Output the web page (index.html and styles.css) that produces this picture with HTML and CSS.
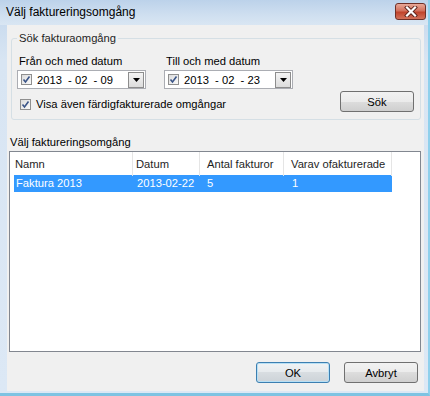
FILE: index.html
```html
<!DOCTYPE html>
<html lang="sv">
<head>
    <meta charset="UTF-8">
    <title>Välj faktureringsomgång</title>
    <link rel="stylesheet" href="styles.css">
</head>
<body>
    <div class="window">
        <div class="titlebar">
            <span class="title">Välj faktureringsomgång</span>
            <button class="close">
                <svg width="14" height="11" viewBox="0 0 14 11">
                    <path d="M3 1.5 L11 9.5 M11 1.5 L3 9.5" stroke="#5b231c" stroke-width="4" stroke-linecap="square"/>
                    <path d="M3 1.5 L11 9.5 M11 1.5 L3 9.5" stroke="#ffffff" stroke-width="2.2" stroke-linecap="square"/>
                </svg>
            </button>
        </div>

        <div class="client">
            <!-- Search group -->
            <fieldset class="group">
                <legend>Sök fakturaomgång</legend>
                <div class="date-row">
                    <div class="field">
                        <div class="field-label">Från och med datum</div>
                        <div class="datepicker">
                            <span class="check"><svg width="11" height="11" viewBox="0 0 11 11"><path d="M2.5 5.5 L4.5 8 L8.5 2.5" fill="none" stroke="#3b5588" stroke-width="1.6"/></svg></span>
                            <span class="date-text">2013 &nbsp;- 02 &nbsp;- 09</span>
                            <span class="drop"><svg width="7" height="4" viewBox="0 0 7 4"><path d="M0 0 H7 L3.5 4 Z" fill="#000"/></svg></span>
                        </div>
                    </div>
                    <div class="field">
                        <div class="field-label">Till och med datum</div>
                        <div class="datepicker">
                            <span class="check"><svg width="11" height="11" viewBox="0 0 11 11"><path d="M2.5 5.5 L4.5 8 L8.5 2.5" fill="none" stroke="#3b5588" stroke-width="1.6"/></svg></span>
                            <span class="date-text">2013 &nbsp;- 02 &nbsp;- 23</span>
                            <span class="drop"><svg width="7" height="4" viewBox="0 0 7 4"><path d="M0 0 H7 L3.5 4 Z" fill="#000"/></svg></span>
                        </div>
                    </div>
                </div>
                <div class="option-row">
                    <label class="checkbox">
                        <span class="check"><svg width="11" height="11" viewBox="0 0 11 11"><path d="M2.5 5.5 L4.5 8 L8.5 2.5" fill="none" stroke="#3b5588" stroke-width="1.6"/></svg></span>
                        Visa även färdigfakturerade omgångar
                    </label>
                    <button class="btn">Sök</button>
                </div>
            </fieldset>

            <!-- Result list -->
            <div class="list-label">Välj faktureringsomgång</div>
            <div class="listview">
                <div class="list-header">
                    <div class="col">Namn</div>
                    <div class="col">Datum</div>
                    <div class="col">Antal fakturor</div>
                    <div class="col">Varav ofakturerade</div>
                </div>
                <div class="list-row selected">
                    <div class="cell">Faktura 2013</div>
                    <div class="cell">2013-02-22</div>
                    <div class="cell">5</div>
                    <div class="cell">1</div>
                </div>
            </div>

            <div class="buttons">
                <button class="btn default">OK</button>
                <button class="btn">Avbryt</button>
            </div>
        </div>
    </div>
</body>
</html>
```

FILE: styles.css
```css
body {
    margin: 0;
    padding: 0;
    font-family: "Liberation Sans", Arial, sans-serif;
    font-size: 11.2px;
    color: #000;
    background-color: #ffffff;
}

.window {
    width: 430px;
    height: 396px;
    box-sizing: border-box;
    display: flex;
    flex-direction: column;
    background: linear-gradient(#c2d6ec, #d8e5f3 60px, #dce8f5);
    border-right: 2px solid #8fd0ec;
    border-bottom: 3px solid #7ec3e2;
}

.titlebar {
    height: 25px;
    display: flex;
    align-items: center;
    justify-content: space-between;
    padding-left: 6px;
    font-size: 12px;
    background: linear-gradient(#bcd2ea, #cfdff0 60%, #d9e6f3);
}

.title {
    margin-top: -2px;
}

.close {
    width: 31px;
    height: 17px;
    margin-right: 2px;
    margin-top: -3px;
    padding: 0;
    border: 1px solid #6f3027;
    border-radius: 3px;
    background: linear-gradient(#e8a898, #d2705c 45%, #c0442c 55%, #d2715a);
    display: flex;
    align-items: center;
    justify-content: center;
}

.client {
    flex: 1;
    margin: 0 4px 2px 7px;
    padding: 0 0 8px 0;
    background-color: #f0f0f0;
    display: flex;
    flex-direction: column;
}

/* Search group */
.group {
    margin: 7px 3px 0 4px;
    padding: 10px 5px 7px 5px;
    border: 1px solid #d5dfe5;
    border-radius: 3px;
}

.group legend {
    padding: 0 2px;
    color: #1e1e1e;
}

.date-row {
    display: flex;
    gap: 18px;
}

.field-label {
    height: 14px;
    line-height: 14px;
    padding-left: 2px;
    white-space: nowrap;
}

.datepicker {
    width: 124px;
    height: 17px;
    margin-top: 2px;
    border: 1px solid #abadb3;
    background-color: #fff;
    display: flex;
    align-items: center;
    padding-left: 3px;
}

.date-text {
    flex: 1;
    margin-left: 5px;
    white-space: nowrap;
}

.drop {
    width: 14px;
    height: 14px;
    margin-right: 1px;
    border: 1px solid #8d8d8d;
    background: linear-gradient(#f4f4f4, #dcdcdc);
    display: flex;
    align-items: center;
    justify-content: center;
}

.check {
    width: 11px;
    height: 11px;
    box-sizing: border-box;
    border: 1px solid #8f8f8f;
    background: linear-gradient(135deg, #dcdcdc, #fafafa);
    display: inline-flex;
    align-items: center;
    justify-content: center;
}

.check svg {
    margin: -1px;
}

.option-row {
    display: flex;
    justify-content: space-between;
    align-items: flex-end;
    margin-top: 2px;
}

.checkbox {
    display: flex;
    align-items: center;
    gap: 5px;
    height: 14px;
    padding-left: 3px;
    margin-bottom: 1px;
    white-space: nowrap;
}

.btn {
    width: 74px;
    height: 21px;
    padding: 0;
    margin-right: 1px;
    font-family: "Liberation Sans", Arial, sans-serif;
    font-size: 11.2px;
    color: #000;
    border: 1px solid #707070;
    border-radius: 3px;
    background: linear-gradient(#f2f2f2, #ebebeb 50%, #dddddd 50%, #cfcfcf);
}

.btn.default {
    border-color: #3c7fb1;
    box-shadow: inset 0 0 0 1px #b8e0f5;
    background: linear-gradient(#f0f3f5, #e6eaed 50%, #d8dde1 50%, #cdd3d8);
}

/* Result list */
.list-label {
    margin-top: 15px;
    height: 14px;
    line-height: 14px;
    padding-left: 3px;
}

.listview {
    flex: 1;
    margin: 2px 3px 0 2px;
    border: 1px solid #828790;
    background-color: #fff;
}

.list-header {
    display: grid;
    grid-template-columns: 123px 67px 84px 108px;
    height: 23px;
}

.list-header .col {
    line-height: 24px;
    padding-left: 5px;
    border-right: 1px solid #e5e5e5;
    color: #1e1e1e;
    white-space: nowrap;
}

.list-header .col:nth-child(2) { padding-left: 3px; }
.list-header .col:nth-child(3) { padding-left: 7px; }
.list-header .col:nth-child(4) { padding-left: 7px; }

.list-row {
    display: grid;
    grid-template-columns: 119px 67px 84px 108px;
    width: max-content;
    margin-left: 4px;
    height: 17px;
    line-height: 17px;
    white-space: nowrap;
}

.list-row .cell {
    padding-left: 2px;
}

.list-row .cell:nth-child(2) { padding-left: 4px; }
.list-row .cell:nth-child(3) { padding-left: 7px; }
.list-row .cell:nth-child(4) { padding-left: 8px; }

.list-row.selected {
    background-color: #3399ff;
    color: #fff;
}

.buttons {
    display: flex;
    justify-content: flex-end;
    gap: 13px;
    margin: 10px 5px 0 0;
}
```
